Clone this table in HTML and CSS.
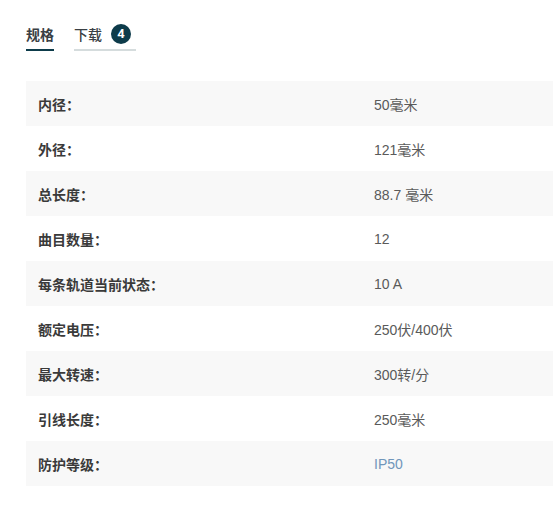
FILE: index.html
```html
<!DOCTYPE html>
<html lang="zh">
<head>
<meta charset="utf-8">
<link rel="stylesheet" href="styles.css">
</head>
<body>
<div class="page">
  <div class="tabs">
    <div class="tab active">规格</div>
    <div class="tab">下载 <span class="badge">4</span></div>
  </div>
  <div class="specs">
    <div class="row"><div class="label">内径：</div><div class="value">50毫米</div></div>
    <div class="row"><div class="label">外径：</div><div class="value">121毫米</div></div>
    <div class="row"><div class="label">总长度：</div><div class="value">88.7 毫米</div></div>
    <div class="row"><div class="label">曲目数量：</div><div class="value">12</div></div>
    <div class="row"><div class="label">每条轨道当前状态：</div><div class="value">10 A</div></div>
    <div class="row"><div class="label">额定电压：</div><div class="value">250伏/400伏</div></div>
    <div class="row"><div class="label">最大转速：</div><div class="value">300转/分</div></div>
    <div class="row"><div class="label">引线长度：</div><div class="value">250毫米</div></div>
    <div class="row"><div class="label">防护等级：</div><div class="value link">IP50</div></div>
  </div>
</div>
</body>
</html>
```

FILE: styles.css
```css
html, body {
  margin: 0;
  padding: 0;
  background: #fff;
}
body {
  font-family: Roboto, "Noto Sans CJK SC", sans-serif;
  color: #333;
  overflow: hidden;
}
.page {
  padding: 22px 0 0 26px;
}
.tabs {
  display: flex;
  gap: 20px;
}
.tab {
  display: flex;
  align-items: center;
  gap: 9px;
  height: 23px;
  padding-bottom: 4px;
  font-size: 14px;
  font-weight: 500;
  color: #3a3f44;
  border-bottom: 2px solid #d5dcdd;
}
.tab:last-child {
  padding-right: 5px;
}
.tab.active {
  border-bottom-color: #0d3b4a;
  font-weight: 700;
}
.badge {
  width: 20px;
  height: 20px;
  border-radius: 50%;
  background: #0d3b4a;
  color: #fff;
  font-size: 13px;
  font-weight: 700;
  display: flex;
  align-items: center;
  justify-content: center;
}
.specs {
  margin-top: 30px;
}
.row {
  display: grid;
  grid-template-columns: 336px 1fr;
  height: 45px;
  align-items: center;
}
.row:nth-child(odd) {
  background: #f8f8f8;
}
.label {
  padding-left: 12px;
  font-size: 14px;
  font-weight: 700;
  color: #3a3a3a;
}
.value {
  padding-left: 12px;
  font-family: "Liberation Sans", "Noto Sans CJK SC", sans-serif;
  font-size: 14px;
  color: #5a5a5a;
}
.value.link {
  color: #7096bb;
}
```
